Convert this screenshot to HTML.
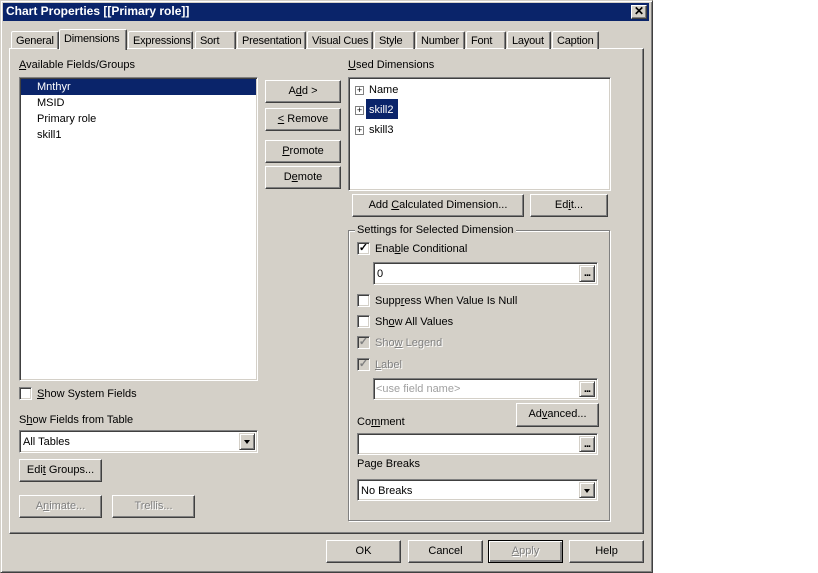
<!DOCTYPE html>
<html><head><style>
*{box-sizing:border-box;margin:0;padding:0}
body{width:818px;height:573px;background:#fff;font-family:"Liberation Sans",sans-serif;font-size:11px;color:#000;position:relative;overflow:hidden}
.a{position:absolute}
#dlg{left:0;top:0;width:653px;height:573px;background:#d4d0c8;border:1px solid;border-color:#d4d0c8 #404040 #404040 #d4d0c8;box-shadow:inset 1px 1px #fff,inset -1px -1px #808080}
.btn{position:absolute;background:#d4d0c8;border:1px solid;border-color:#fff #404040 #404040 #fff;box-shadow:inset -1px -1px #808080;text-align:center;line-height:21px;white-space:nowrap}
.sunk{position:absolute;background:#fff;border:1px solid;border-color:#808080 #fff #fff #808080;box-shadow:inset 1px 1px #404040,inset -1px -1px #d4d0c8}
.cb{position:absolute;width:13px;height:13px;background:#fff;border:1px solid;border-color:#808080 #fff #fff #808080;box-shadow:inset 1px 1px #404040,inset -1px -1px #d4d0c8}
.cb.dis{background:#d4d0c8}
.tab{position:absolute;top:31px;height:18px;border:1px solid;border-bottom:none;border-color:#fff #404040 #404040 #fff;border-radius:2px 2px 0 0;box-shadow:inset -1px 0 #808080;padding:3px 0 0 4px;line-height:13px;white-space:nowrap;overflow:hidden;letter-spacing:-0.2px}
.lbl{position:absolute;white-space:nowrap;line-height:13px}
.gray{color:#808080;text-shadow:1px 1px #fff}
.dd{position:absolute;right:2px;top:2px;width:16px;bottom:2px;background:#d4d0c8;border:1px solid;border-color:#d4d0c8 #404040 #404040 #d4d0c8;box-shadow:inset 1px 1px #fff,inset -1px -1px #808080}
.dd:after{content:"";position:absolute;left:4px;top:6px;border:3.5px solid transparent;border-top:4px solid #000;border-bottom:0}
.el{position:absolute;right:2px;top:2px;width:16px;bottom:2px;background:#d4d0c8;border:1px solid;border-color:#d4d0c8 #404040 #404040 #d4d0c8;box-shadow:inset 1px 1px #fff,inset -1px -1px #808080;font-weight:bold;font-size:11px;line-height:15px;text-align:center;letter-spacing:-1px}
.pl{position:absolute;left:6px;width:9px;height:9px;border:1px solid #808080;background:#fff;font-size:9px;line-height:7px;text-align:center}
u{text-decoration:underline}
</style></head><body>
<div id="dlg" class="a"></div>
<div class="a" style="left:3px;top:3px;width:646px;height:18px;background:#0a246a"></div>
<div class="lbl" style="left:6px;top:5px;color:#fff;font-weight:bold;font-size:12px">Chart Properties [[Primary role]]</div>
<div class="btn" style="left:631px;top:5px;width:16px;height:14px;line-height:11px;font-weight:bold;font-size:12px">✕</div>

<div class="a" style="left:9px;top:48px;width:635px;height:486px;border:1px solid;border-color:#fff #404040 #404040 #fff;box-shadow:inset -1px -1px #808080"></div>
<div class="tab" style="left:11px;width:48px">General</div>
<div class="tab" style="left:128px;width:65px">Expressions</div>
<div class="tab" style="left:195px;width:41px">Sort</div>
<div class="tab" style="left:237px;width:69px">Presentation</div>
<div class="tab" style="left:307px;width:66px">Visual Cues</div>
<div class="tab" style="left:374px;width:41px">Style</div>
<div class="tab" style="left:416px;width:49px">Number</div>
<div class="tab" style="left:466px;width:40px">Font</div>
<div class="tab" style="left:507px;width:44px">Layout</div>
<div class="tab" style="left:552px;width:47px">Caption</div>
<div class="tab" style="left:59px;top:29px;width:68px;height:21px;background:#d4d0c8;z-index:2">Dimensions</div>

<div class="lbl" style="left:19px;top:59px"><u>A</u>vailable Fields/Groups</div>
<div class="sunk" style="left:19px;top:77px;width:239px;height:304px"></div>
<div class="a" style="left:21px;top:79px;width:235px;height:16px;background:#0a246a"></div>
<div class="lbl" style="left:37px;top:81px;color:#fff">Mnthyr</div>
<div class="lbl" style="left:37px;top:97px">MSID</div>
<div class="lbl" style="left:37px;top:113px">Primary role</div>
<div class="lbl" style="left:37px;top:129px">skill1</div>

<div class="btn" style="left:265px;top:80px;width:76px;height:23px">A<u>d</u>d &gt;</div>
<div class="btn" style="left:265px;top:108px;width:76px;height:23px"><u>&lt;</u> Remove</div>
<div class="btn" style="left:265px;top:140px;width:76px;height:23px"><u>P</u>romote</div>
<div class="btn" style="left:265px;top:166px;width:76px;height:23px">D<u>e</u>mote</div>

<div class="cb" style="left:19px;top:387px"></div>
<div class="lbl" style="left:37px;top:388px"><u>S</u>how System Fields</div>
<div class="lbl" style="left:19px;top:414px">S<u>h</u>ow Fields from Table</div>
<div class="sunk" style="left:19px;top:430px;width:239px;height:23px"><div class="lbl" style="left:3px;top:5px">All Tables</div><div class="dd"></div></div>
<div class="btn" style="left:19px;top:459px;width:83px;height:23px">Edi<u>t</u> Groups...</div>
<div class="btn gray" style="left:19px;top:495px;width:83px;height:23px">A<u>n</u>imate...</div>
<div class="btn gray" style="left:112px;top:495px;width:83px;height:23px">Trellis...</div>

<div class="lbl" style="left:348px;top:59px"><u>U</u>sed Dimensions</div>
<div class="sunk" style="left:348px;top:77px;width:263px;height:114px">
<div class="pl" style="top:8px">+</div><div class="lbl" style="left:20px;top:6px">Name</div>
<div class="a" style="left:17px;top:21px;width:32px;height:20px;background:#0a246a"></div>
<div class="pl" style="top:28px">+</div><div class="lbl" style="left:20px;top:26px;color:#fff">skill2</div>
<div class="pl" style="top:48px">+</div><div class="lbl" style="left:20px;top:46px">skill3</div>
</div>
<div class="btn" style="left:352px;top:194px;width:172px;height:23px">Add <u>C</u>alculated Dimension...</div>
<div class="btn" style="left:530px;top:194px;width:78px;height:23px">Ed<u>i</u>t...</div>

<div class="a" style="left:348px;top:230px;width:262px;height:291px;border:1px solid #808080;box-shadow:1px 1px #fff,inset 1px 1px #fff"></div>
<div class="lbl" style="left:355px;top:224px;background:#d4d0c8;padding:0 2px">Settings for Selected Dimension</div>
<div class="cb" style="left:357px;top:242px;font-size:11px;line-height:10px;text-align:center;font-weight:bold">✓</div>
<div class="lbl" style="left:375px;top:243px">Ena<u>b</u>le Conditional</div>
<div class="sunk" style="left:373px;top:262px;width:225px;height:23px"><div class="lbl" style="left:3px;top:5px">0</div><div class="el">...</div></div>
<div class="cb" style="left:357px;top:294px"></div>
<div class="lbl" style="left:375px;top:295px">Supp<u>r</u>ess When Value Is Null</div>
<div class="cb" style="left:357px;top:315px"></div>
<div class="lbl" style="left:375px;top:316px">Sh<u>o</u>w All Values</div>
<div class="cb dis" style="left:357px;top:336px;font-size:11px;line-height:10px;text-align:center;font-weight:bold;color:#808080">✓</div>
<div class="lbl gray" style="left:375px;top:337px">Sho<u>w</u> Legend</div>
<div class="cb dis" style="left:357px;top:358px;font-size:11px;line-height:10px;text-align:center;font-weight:bold;color:#808080">✓</div>
<div class="lbl gray" style="left:375px;top:359px"><u>L</u>abel</div>
<div class="sunk" style="left:373px;top:378px;width:225px;height:22px"><div class="lbl" style="left:2px;top:4px;color:#a0a0a0">&lt;use field name&gt;</div><div class="el">...</div></div>
<div class="btn" style="left:516px;top:403px;width:83px;height:24px">Ad<u>v</u>anced...</div>
<div class="lbl" style="left:357px;top:416px">Co<u>m</u>ment</div>
<div class="sunk" style="left:357px;top:433px;width:241px;height:22px"><div class="el">...</div></div>
<div class="lbl" style="left:357px;top:458px">Page Breaks</div>
<div class="sunk" style="left:357px;top:479px;width:241px;height:22px"><div class="lbl" style="left:3px;top:5px">No Breaks</div><div class="dd"></div></div>

<div class="btn" style="left:326px;top:540px;width:75px;height:23px">OK</div>
<div class="btn" style="left:408px;top:540px;width:75px;height:23px">Cancel</div>
<div class="btn gray" style="left:488px;top:540px;width:75px;height:23px;border-color:#000;box-shadow:inset 1px 1px #fff,inset -2px -2px #808080"><u>A</u>pply</div>
<div class="btn" style="left:569px;top:540px;width:75px;height:23px">Help</div>
</body></html>
